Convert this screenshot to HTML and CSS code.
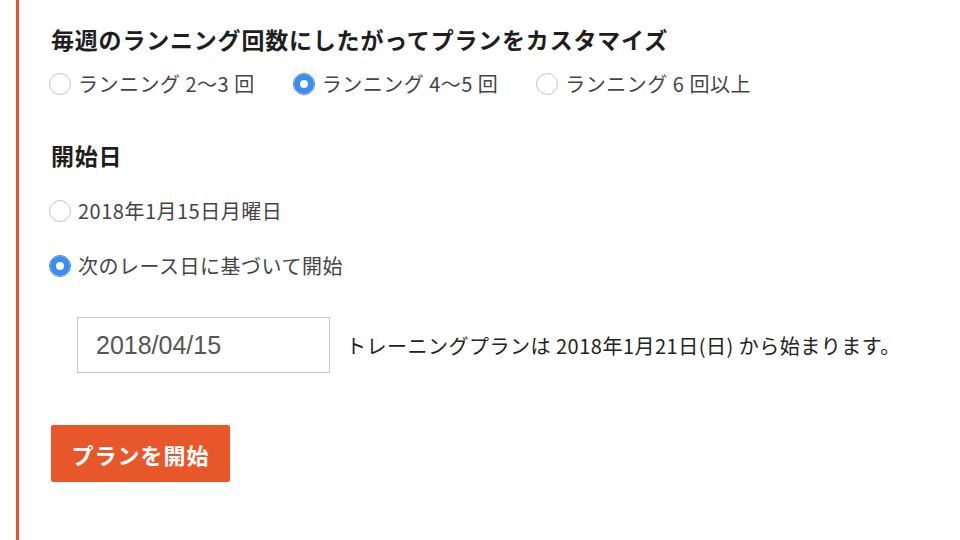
FILE: index.html
```html
<!DOCTYPE html>
<html lang="ja">
<head>
    <meta charset="UTF-8">
    <meta name="viewport" content="width=device-width, initial-scale=1.0">
    <title>プランの設定</title>
    <link rel="stylesheet" href="styles.css">
</head>
<body>
    <div class="panel">
        <h2 class="title">毎週のランニング回数にしたがってプランをカスタマイズ</h2>
        <div class="runs">
            <label class="choice"><input type="radio" name="runs"> ランニング 2〜3 回</label>
            <label class="choice"><input type="radio" name="runs" checked> ランニング 4〜5 回</label>
            <label class="choice"><input type="radio" name="runs"> ランニング 6 回以上</label>
        </div>

        <h2 class="title start-title">開始日</h2>
        <div class="starts">
            <label class="choice"><input type="radio" name="start">2018年1月15日月曜日</label>
            <label class="choice"><input type="radio" name="start" checked>次のレース日に基づいて開始</label>
        </div>

        <div class="race-date">
            <input type="text" class="date-input" value="2018/04/15">
            <p class="note">トレーニングプランは 2018年1月21日(日) から始まります。</p>
        </div>

        <button class="start-btn">プランを開始</button>
    </div>
</body>
</html>
```

FILE: styles.css
```css
body { margin: 0; font-family: "Noto Sans CJK JP", "Noto Sans", sans-serif; background: #fff; color: #222; }
.panel { margin-left: 16px; border-left: 3px solid #e8572a; padding: 22px 0 58px 32px; min-height: 460px; }
.title { margin: 0; font-size: 23px; font-weight: bold; line-height: 34px; color: #1e1e1e; letter-spacing: 0.8px; }
.start-title { margin-top: 38px; }
.runs { display: flex; gap: 40px; margin-top: 12px; }
.starts { display: flex; flex-direction: column; gap: 23px; margin-top: 23px; }
.choice { display: flex; align-items: center; font-size: 20px; line-height: 32px; color: #444; letter-spacing: 0.5px; }
.choice input { appearance: none; -webkit-appearance: none; width: 22px; height: 22px; margin: 0 7px 0 -2px; border: 1.5px solid #c4c4c4; border-radius: 50%; background: #fff; box-sizing: border-box; }
.choice input:checked { border-color: #3b8ced; box-shadow: inset 0 0 0 6px #3b8ced; background: #fff; }
.race-date { display: flex; align-items: center; gap: 16px; margin: 35px 0 0 26px; }
.date-input { width: 253px; height: 56px; box-sizing: border-box; border: 1px solid #c8c8c8; padding: 0 18px; font-family: "Liberation Sans", "Noto Sans", sans-serif; font-size: 25px; color: #555; }
.note { margin: 0; font-size: 20px; color: #222; letter-spacing: 0.5px; }
.start-btn { margin-top: 52px; width: 179px; height: 57px; border: none; border-radius: 2px; background: #e8572a; color: #fff; font-family: inherit; font-size: 22px; font-weight: bold; letter-spacing: 1px; cursor: pointer; }
```
